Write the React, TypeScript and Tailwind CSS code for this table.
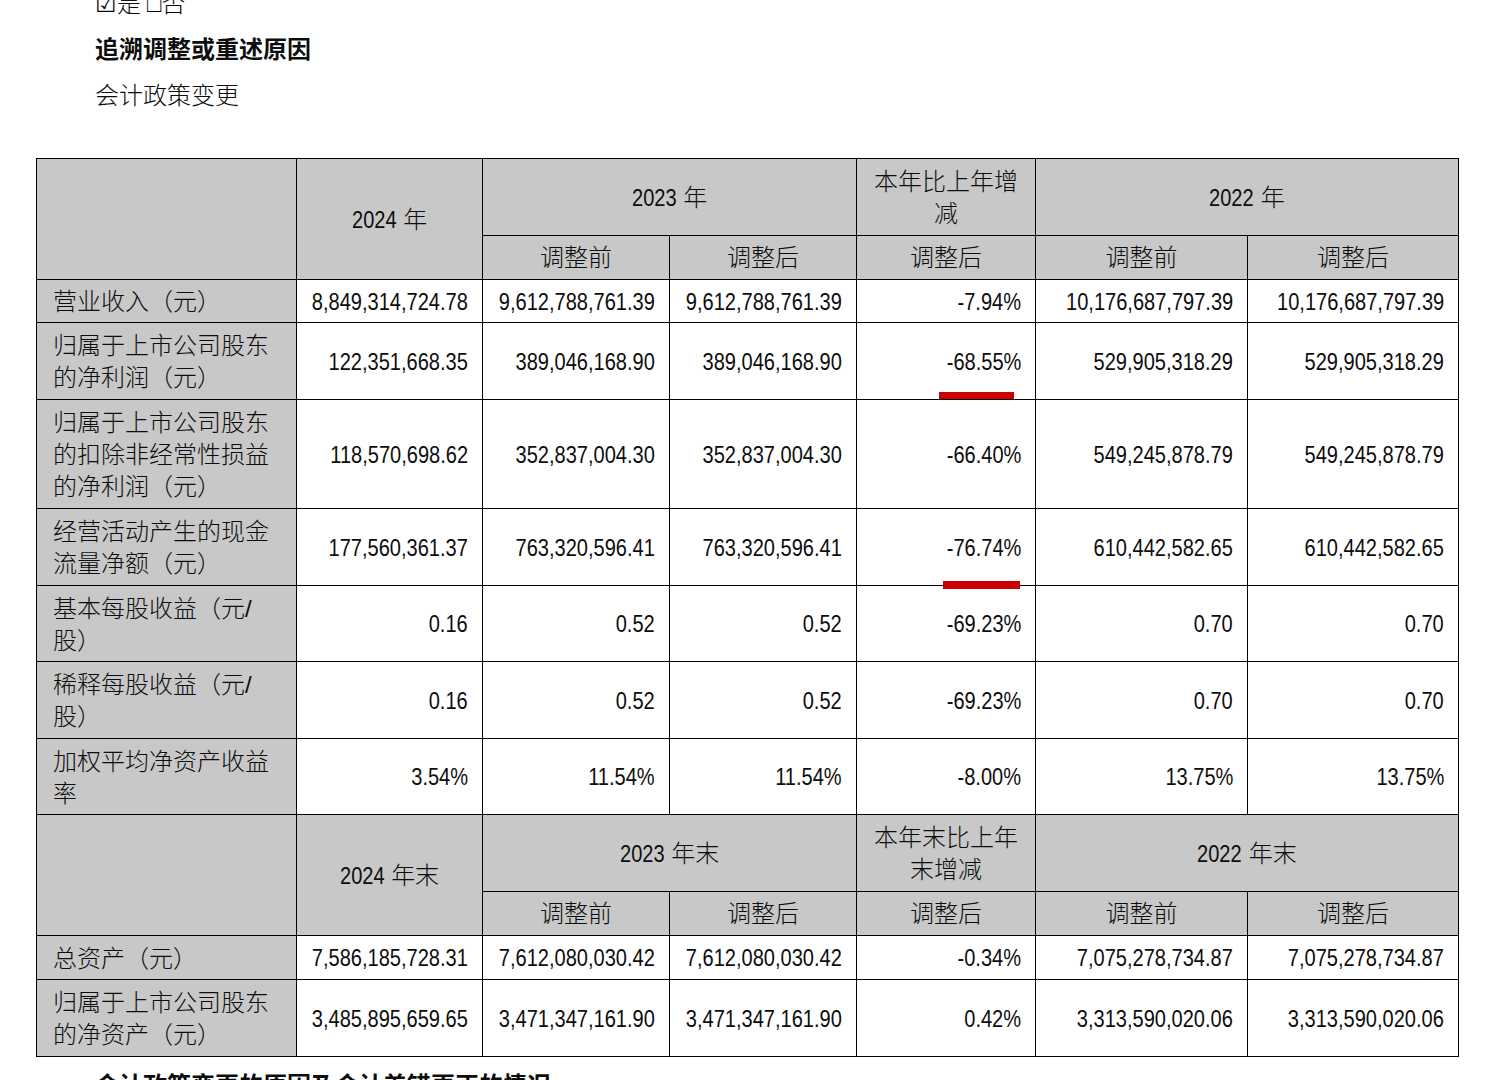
import React from "react";

type Row = { label: string[]; vals: string[]; h: string };

const rows1: Row[] = [
  { label: ["营业收入（元）"], vals: ["8,849,314,724.78", "9,612,788,761.39", "9,612,788,761.39", "-7.94%", "10,176,687,797.39", "10,176,687,797.39"], h: "h-[43px]" },
  { label: ["归属于上市公司股东", "的净利润（元）"], vals: ["122,351,668.35", "389,046,168.90", "389,046,168.90", "-68.55%", "529,905,318.29", "529,905,318.29"], h: "h-[77px]" },
  { label: ["归属于上市公司股东", "的扣除非经常性损益", "的净利润（元）"], vals: ["118,570,698.62", "352,837,004.30", "352,837,004.30", "-66.40%", "549,245,878.79", "549,245,878.79"], h: "h-[109px]" },
  { label: ["经营活动产生的现金", "流量净额（元）"], vals: ["177,560,361.37", "763,320,596.41", "763,320,596.41", "-76.74%", "610,442,582.65", "610,442,582.65"], h: "h-[77px]" },
  { label: ["基本每股收益（元/", "股）"], vals: ["0.16", "0.52", "0.52", "-69.23%", "0.70", "0.70"], h: "h-[76px]" },
  { label: ["稀释每股收益（元/", "股）"], vals: ["0.16", "0.52", "0.52", "-69.23%", "0.70", "0.70"], h: "h-[77px]" },
  { label: ["加权平均净资产收益", "率"], vals: ["3.54%", "11.54%", "11.54%", "-8.00%", "13.75%", "13.75%"], h: "h-[76px]" },
];

const rows2: Row[] = [
  { label: ["总资产（元）"], vals: ["7,586,185,728.31", "7,612,080,030.42", "7,612,080,030.42", "-0.34%", "7,075,278,734.87", "7,075,278,734.87"], h: "h-[44px]" },
  { label: ["归属于上市公司股东", "的净资产（元）"], vals: ["3,485,895,659.65", "3,471,347,161.90", "3,471,347,161.90", "0.42%", "3,313,590,020.06", "3,313,590,020.06"], h: "h-[77px]" },
];

const gray = "bg-[#c8c8c8]";
const cellB = "border border-black";

function Label({ lines }: { lines: string[] }) {
  return (
    <td className={`${cellB} ${gray} pl-[16px] pr-[8px] pt-[2px] pb-0 text-left align-middle font-light`}>
      {lines.map((l, i) => (
        <div key={i} className="whitespace-nowrap">{l}</div>
      ))}
    </td>
  );
}

function DataRow({ r }: { r: Row }) {
  return (
    <tr className={r.h}>
      <Label lines={r.label} />
      {r.vals.map((v, i) => (
        <td key={i} className={`${cellB} bg-white p-0 pt-[1px] align-middle`}>
          <div className="flex justify-end pr-[14px] whitespace-nowrap">
            <span className="inline-block origin-right scale-x-[0.835] whitespace-nowrap">{v}</span>
          </div>
        </td>
      ))}
    </tr>
  );
}

function Year({ y, suffix }: { y: string; suffix: string }) {
  return (
    <div className="flex justify-center items-baseline whitespace-nowrap">
      <span className="inline-block origin-left scale-x-[0.835] mr-[-8.8px]">{y}</span>
      <span className="font-light">&nbsp;{suffix}</span>
    </div>
  );
}

function Header({ a, b, c, d, s }: { a: string; b: string; c: string[]; d: string; s: string }) {
  return (
    <>
      <tr className="h-[77px]">
        <td rowSpan={2} className={`${cellB} ${gray}`}></td>
        <td rowSpan={2} className={`${cellB} ${gray} text-center align-middle pt-[1px]`}>
          <Year y={a} suffix={s} />
        </td>
        <td colSpan={2} className={`${cellB} ${gray} text-center align-middle pt-[1px]`}>
          <Year y={b} suffix={s} />
        </td>
        <td className={`${cellB} ${gray} text-center align-middle px-[10px] pt-[1px] font-light`}>
          {c.map((l, i) => (
            <div key={i} className="whitespace-nowrap">{l}</div>
          ))}
        </td>
        <td colSpan={2} className={`${cellB} ${gray} text-center align-middle pt-[1px]`}>
          <Year y={d} suffix={s} />
        </td>
      </tr>
      <tr className="h-[44px] font-light">
        <td className={`${cellB} ${gray} text-center align-middle pt-[1px]`}>调整前</td>
        <td className={`${cellB} ${gray} text-center align-middle pt-[1px]`}>调整后</td>
        <td className={`${cellB} ${gray} text-center align-middle pt-[1px]`}>调整后</td>
        <td className={`${cellB} ${gray} text-center align-middle pt-[1px]`}>调整前</td>
        <td className={`${cellB} ${gray} text-center align-middle pt-[1px]`}>调整后</td>
      </tr>
    </>
  );
}

export default function App() {
  return (
    <div className="relative w-[1496px] h-[1080px] overflow-hidden bg-white text-[#0d0d0d] font-['Liberation_Sans','Noto_Sans_CJK_SC',sans-serif] text-[24px] leading-[32px]">
      <div className="flex flex-col pl-[95px] font-['Liberation_Serif','Noto_Sans_CJK_SC',serif]">
        <div className="mt-[-12px] font-light">☑是 □否</div>
        <div className="mt-[14px] font-bold">追溯调整或重述原因</div>
        <div className="mt-[14px] font-light">会计政策变更</div>
      </div>
      <div className="ml-[36px] mt-[46px]">
        <table className="table-fixed border-collapse w-[1423px]">
          <colgroup>
            <col className="w-[260px]" />
            <col className="w-[186px]" />
            <col className="w-[187px]" />
            <col className="w-[187px]" />
            <col className="w-[179px]" />
            <col className="w-[212px]" />
            <col className="w-[211px]" />
          </colgroup>
          <tbody>
            <Header a="2024" b="2023" c={["本年比上年增", "减"]} d="2022" s="年" />
            {rows1.map((r, i) => (
              <DataRow key={i} r={r} />
            ))}
            <Header a="2024" b="2023" c={["本年末比上年", "末增减"]} d="2022" s="年末" />
            {rows2.map((r, i) => (
              <DataRow key={i} r={r} />
            ))}
          </tbody>
        </table>
      </div>
      <div className="pl-[95px] mt-[13px] font-bold font-['Liberation_Serif','Noto_Sans_CJK_SC',serif]">
        会计政策变更的原因及会计差错更正的情况
      </div>
      <div className="absolute left-[939px] top-[392px] w-[75px] h-[7px] bg-[#cc0000]" />
      <div className="absolute left-[943px] top-[581px] w-[77px] h-[8px] bg-[#cc0000]" />
    </div>
  );
}
